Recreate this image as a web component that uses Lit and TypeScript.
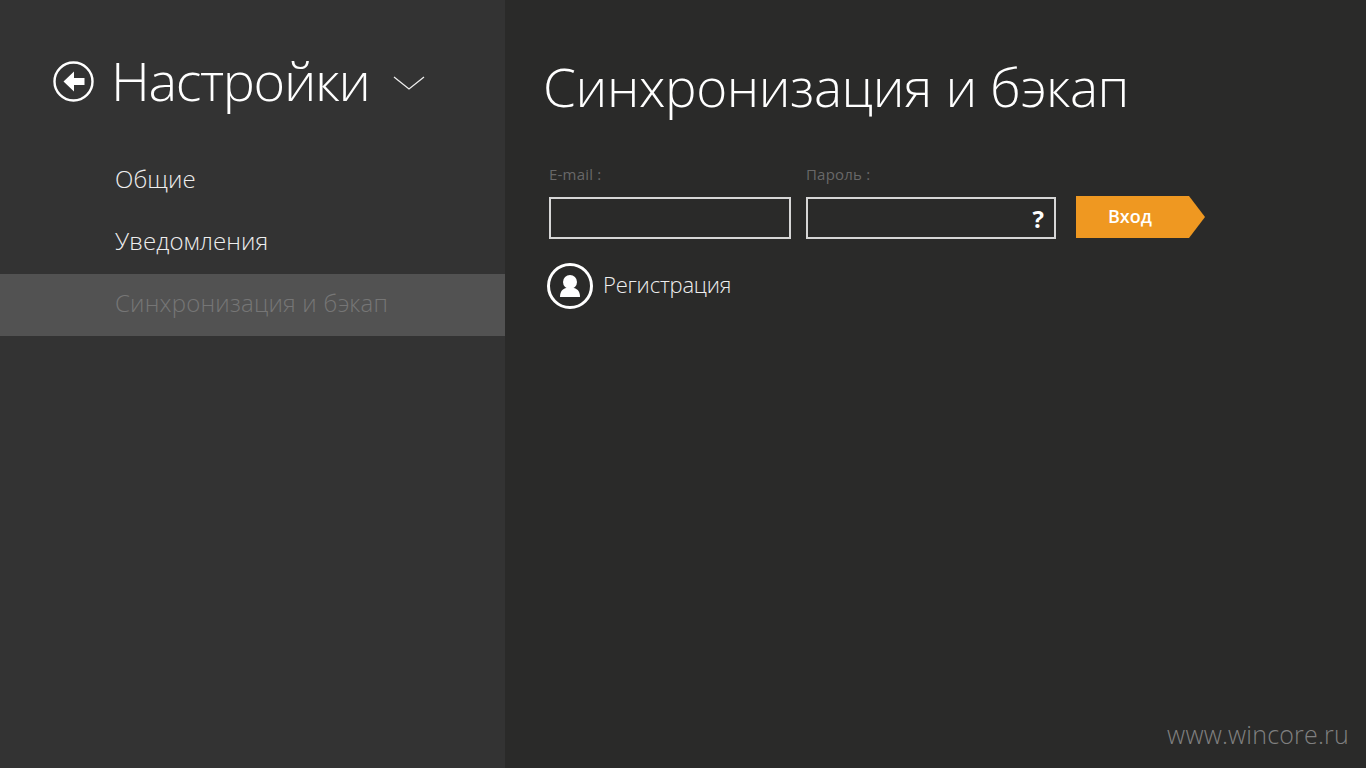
import { LitElement, html, css } from "lit";
import { customElement } from "lit/decorators.js";

@customElement("app-root")
export class AppRoot extends LitElement {
  static styles = css`
    :host {
      display: block;
      width: 1366px;
      height: 768px;
      overflow: hidden;
      font-family: "Open Sans", "Noto Sans", sans-serif;
      font-weight: 300;
      color: #fff;
      background: #2a2a29;
    }
    .page { display: flex; height: 768px; position: relative; }
    .side { width: 505px; flex: none; background: #333; }
    .head { display: flex; align-items: center; height: 150px; padding: 12px 0 0 53px; box-sizing: border-box; }
    .back { width: 41px; height: 41px; flex: none; margin-right: 17px; }
    .head h2 { margin: 0 0 3px; font-size: 54px; font-weight: 300; line-height: 60px; letter-spacing: -1.35px; }
    .chev { width: 32px; height: 14px; margin: 3px 0 0 24px; }
    .nav { display: flex; flex-direction: column; }
    .nav a { height: 62px; line-height: 58px; padding-left: 115px; font-size: 24px; color: #eee; letter-spacing: 0.1px; }
    .nav a.on { background: #525252; color: #767676; letter-spacing: 0.2px; }
    .main { flex: 1; padding: 0 0 0 38px; }
    h1 { margin: 54px 0 0; font-size: 53px; font-weight: 300; line-height: 66px; letter-spacing: -0.37px; }
    .form { display: flex; align-items: flex-end; margin: 44px 0 0 6px; }
    .field { display: flex; flex-direction: column; margin-right: 15px; }
    label { font-size: 15px; font-weight: 400; color: #686868; letter-spacing: 0.2px; line-height: 20px; margin-bottom: 13px; }
    .box { height: 42px; box-sizing: border-box; border: 2px solid #d6d6d6; display: flex; align-items: center; justify-content: flex-end; padding-right: 10px; font-size: 24px; font-weight: 700; }
    .email { width: 242px; }
    .pass { width: 250px; }
    .go { width: 129px; height: 42px; margin: 0 0 1px 5px; padding: 0 0 2px 32px; background: #ef9821; color: #fff; font-size: 18px; font-weight: 600; display: flex; align-items: center; box-sizing: border-box; clip-path: polygon(0 0, 113px 0, 100% 50%, 113px 100%, 0 100%); }
    .reg { display: flex; align-items: center; margin: 24px 0 0 4px; font-size: 22px; letter-spacing: -0.2px; color: #eee; }
    .reg svg { width: 46px; height: 46px; margin-right: 10px; }
    .reg span { padding-bottom: 4px; }
    .mark { position: absolute; right: 17px; bottom: 16px; font-size: 25px; line-height: 36px; color: #808080; letter-spacing: 0.2px; }
  `;

  render() {
    return html`<div class="page">
      <aside class="side">
        <div class="head">
          <svg class="back" viewBox="0 0 41 41" fill="none">
            <circle cx="20.5" cy="20.5" r="19" stroke="#fff" stroke-width="2.4"/>
            <path d="M21 10.500 10.500 20.500 21 30.500V24h10.500v-7H21z" fill="#fff"/>
          </svg>
          <h2>Настройки</h2>
          <svg class="chev" viewBox="0 0 32 14" fill="none"><path d="M1 1 16 13 31 1" stroke="#eee" stroke-width="1.300"/></svg>
        </div>
        <nav class="nav">
          <a>Общие</a>
          <a>Уведомления</a>
          <a class="on">Синхронизация и бэкап</a>
        </nav>
      </aside>
      <main class="main">
        <h1>Синхронизация и бэкап</h1>
        <div class="form">
          <div class="field"><label>E-mail :</label><div class="box email"></div></div>
          <div class="field"><label>Пароль :</label><div class="box pass">?</div></div>
          <div class="go">Вход</div>
        </div>
        <div class="reg">
          <svg viewBox="0 0 46 46" fill="none">
            <circle cx="23" cy="23" r="21.500" stroke="#fff" stroke-width="3"/>
            <circle cx="23" cy="19" r="7" fill="#fff"/>
            <path d="M13 34c0-5 2-8 6-9h8c4 1 6 4 6 9z" fill="#fff"/>
          </svg>
          <span>Регистрация</span>
        </div>
      </main>
      <div class="mark">www.wincore.ru</div>
    </div>`;
  }
}
